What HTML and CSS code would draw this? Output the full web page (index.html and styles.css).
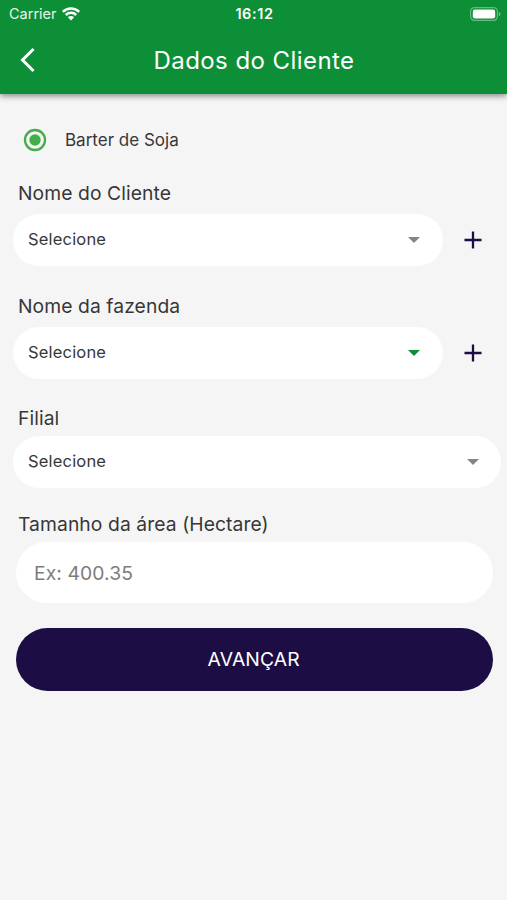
FILE: index.html
```html
<!DOCTYPE html>
<html lang="pt-BR">
<head>
<meta charset="utf-8">
<meta name="viewport" content="width=device-width, initial-scale=1">
<title>Dados do Cliente</title>
<link rel="stylesheet" href="styles.css">
</head>
<body>
<header class="header">
  <div class="status">
    <div class="carrier"><span>Carrier</span>
      <svg width="18" height="14" viewBox="0 0 18 14" fill="none" stroke="#fff" stroke-width="2.5"><path d="M.8 4.9a11.7 11.7 0 0 1 16.4 0M3.8 8a7.4 7.4 0 0 1 10.4 0"/><path d="M9 13.4 5.9 10.3a4.4 4.4 0 0 1 6.2 0Z" fill="#fff" stroke="none"/></svg>
    </div>
    <span class="time">16:12</span>
    <svg class="battery" width="31" height="14" viewBox="0 0 31 14"><rect x=".6" y=".6" width="26.8" height="12.8" rx="4" fill="none" stroke="#fff" stroke-opacity=".38" stroke-width="1.2"/><rect x="2.8" y="2.5" width="22.4" height="9" rx="2.2" fill="#fff"/><path d="M28.8 4.8q1.7.8 1.7 2.2t-1.7 2.2Z" fill="#fff" fill-opacity=".45"/></svg>
  </div>
  <div class="appbar">
    <svg width="16" height="26" viewBox="0 0 16 26" fill="none" stroke="#fff" stroke-width="3"><path d="M13.5 2 2.5 13l11 11"/></svg>
    <h1 class="title">Dados do Cliente</h1>
  </div>
</header>
<main class="form">
  <label class="option">
    <svg width="24" height="24" viewBox="0 0 24 24"><circle cx="12" cy="12" r="10" fill="none" stroke="#43ae49" stroke-width="2.3"/><circle cx="12" cy="12" r="5.7" fill="#43ae49"/></svg>
    <span>Barter de Soja</span>
  </label>
  <section class="field">
    <h2 class="label">Nome do Cliente</h2>
    <div class="row">
      <div class="select"><span>Selecione</span><svg class="caret" width="12" height="6" viewBox="0 0 12 6"><path d="M0 0h12L6 6z"/></svg></div>
      <svg class="plus" width="18" height="18" viewBox="0 0 18 18"><path d="M9 .5v17M.5 9h17"/></svg>
    </div>
  </section>
  <section class="field farm">
    <h2 class="label">Nome da fazenda</h2>
    <div class="row">
      <div class="select"><span>Selecione</span><svg class="caret green" width="12" height="6" viewBox="0 0 12 6"><path d="M0 0h12L6 6z"/></svg></div>
      <svg class="plus" width="18" height="18" viewBox="0 0 18 18"><path d="M9 .5v17M.5 9h17"/></svg>
    </div>
  </section>
  <section class="field branch">
    <h2 class="label">Filial</h2>
    <div class="select"><span>Selecione</span><svg class="caret" width="12" height="6" viewBox="0 0 12 6"><path d="M0 0h12L6 6z"/></svg></div>
  </section>
  <section class="field area">
    <h2 class="label">Tamanho da área (Hectare)</h2>
    <div class="input">Ex: 400.35</div>
  </section>
  <button class="submit" type="button">AVANÇAR</button>
</main>
</body>
</html>
```
FILE: styles.css
```css
* { box-sizing: border-box; }
body {
  margin: 0;
  min-height: 900px;
  background: #f5f5f5;
  color: #373737;
  font-family: Inter, "Liberation Sans", sans-serif;
}
svg { display: block; flex: none; }
.header {
  height: 94px;
  background: #0d8f37;
  color: #fff;
  box-shadow: 0 2px 6px rgba(0, 0, 0, .45);
}
.status {
  display: grid;
  grid-template-columns: 1fr auto 1fr;
  align-items: center;
  height: 27px;
  padding: 0 6px 0 9px;
}
.carrier {
  display: flex;
  align-items: center;
  gap: 5px;
  font-size: 14.5px;
  color: #e6f5ea;
}
.time {
  margin-right: 1px;
  font-size: 14.5px;
  font-weight: 600;
  letter-spacing: .6px;
}
.battery { justify-self: end; }
.appbar {
  display: grid;
  grid-template-columns: 16px 1fr 16px;
  align-items: center;
  height: 66px;
  padding: 0 20px;
}
.title {
  margin: 0;
  padding-left: 1px;
  text-align: center;
  font-size: 24px;
  font-weight: 400;
  letter-spacing: .43px;
}
.form { padding: 34px 6px 0 13px; }
.option {
  display: flex;
  align-items: center;
  gap: 18px;
  height: 24px;
  padding-left: 10px;
  font-size: 17px;
}
.field { margin-top: 21px; }
.farm, .branch { margin-top: 20px; }
.area { margin-top: 16px; }
.label {
  height: 41px;
  margin: 0;
  padding-left: 5px;
  font-size: 19.3px;
  font-weight: 400;
  line-height: 40px;
  letter-spacing: .08px;
}
.row {
  display: flex;
  align-items: center;
  gap: 21px;
}
.select {
  display: flex;
  align-items: center;
  justify-content: space-between;
  width: 430px;
  height: 52px;
  padding: 0 23px 2px 15px;
  border-radius: 26px;
  background: #fff;
  font-size: 16.5px;
  letter-spacing: .18px;
}
.caret { margin-top: 2px; fill: #858585; }
.green { fill: #0d8f37; }
.plus { stroke: #1d0d45; stroke-width: 2.3; }
.branch .select { width: 488px; padding-right: 22px; }
.branch .label { height: 37px; line-height: 38px; }
.area .label { height: 38px; }
.input {
  display: flex;
  align-items: center;
  width: 476.5px;
  height: 61px;
  margin-left: 3px;
  padding-left: 18px;
  border-radius: 31px;
  background: #fff;
  color: #7d7d7d;
  font-size: 19.3px;
  letter-spacing: .1px;
}
.submit {
  display: block;
  width: 476.5px;
  height: 63px;
  margin: 25px 0 0 3px;
  padding: 0 1px 1px 0;
  border: 0;
  border-radius: 32px;
  background: #1d0d45;
  color: #fff;
  font: 400 19.3px Inter, "Liberation Sans", sans-serif;
  letter-spacing: .15px;
}
```
